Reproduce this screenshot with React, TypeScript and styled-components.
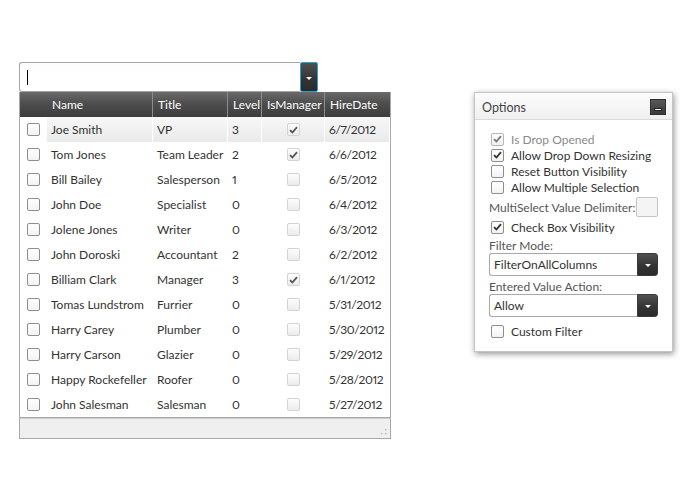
import React from "react";
import styled, { createGlobalStyle, css } from "styled-components";

const GlobalStyle = createGlobalStyle`
  html, body { margin: 0; padding: 0; background: #fff; }
  body {
    font-family: Lato, "Open Sans", sans-serif;
    font-size: 12px;
    color: #333;
    font-variant-numeric: proportional-nums;
  }
`;

const Page = styled.div`
  display: flex;
  align-items: flex-start;
  padding: 62px 0 0 19px;
`;

const GridColumn = styled.div`
  width: 372px;
  display: flex;
  flex-direction: column;
`;

const ComboBox = styled.div`
  display: flex;
  width: 299px;
  height: 30px;
`;

const ComboInput = styled.div`
  flex: 1;
  box-sizing: border-box;
  border: 1px solid #a5a5a5;
  border-right: none;
  border-radius: 3px 0 0 3px;
  background: linear-gradient(#fbfbfb, #fff 40%);
  display: flex;
  align-items: center;
  padding-left: 7px;
`;

const Caret = styled.span`
  width: 1px;
  height: 15px;
  background: #000;
`;

const DarkButton = styled.div<{ $focused?: boolean; $w: number }>`
  width: ${(p) => p.$w}px;
  box-sizing: border-box;
  display: flex;
  align-items: center;
  justify-content: center;
  background: linear-gradient(#505050, #333 60%, #2b2b2b);
  border-radius: 0 3px 3px 0;
  ${(p) =>
    p.$focused
      ? css`border: 1px solid #26a0da; border-radius: 2px;`
      : css`border: 1px solid #3a3a3a;`}
`;

const Triangle = styled.span`
  width: 0;
  height: 0;
  border-left: 3px solid transparent;
  border-right: 3px solid transparent;
  border-top: 3px solid #fff;
  margin-top: 2px;
`;

const Grid = styled.div`
  border: 1px solid #a9a9a9;
  border-top: none;
  display: grid;
  grid-template-columns: 27px 106px 75px 34px 63px 1fr;
`;

const HeaderCell = styled.div<{ $last?: boolean }>`
  height: 25px;
  background: linear-gradient(#6a6a6a, #4e4e4e 45%, #3c3c3c);
  color: #fff;
  font-size: 12px;
  display: flex;
  align-items: center;
  padding-left: 5px;
  box-sizing: border-box;
  border-right: ${(p) => (p.$last ? "none" : "1px solid #8c8c8c")};
  white-space: nowrap;
  overflow: hidden;
`;

const Cell = styled.div<{ $active?: boolean; $center?: boolean; $first?: boolean }>`
  height: 25px;
  display: flex;
  align-items: center;
  justify-content: ${(p) => (p.$center ? "center" : "flex-start")};
  padding-left: ${(p) => (p.$center ? "0" : "4px")};
  box-sizing: border-box;
  white-space: nowrap;
  color: #333;
  ${(p) =>
    p.$active &&
    !p.$first &&
    css`
      background: linear-gradient(#f7f7f7, #eaeaea);
      border-right: 1px solid #fff;
    `}
`;

const DateCell = styled(Cell)`
  letter-spacing: -0.35px;
`;

const Footer = styled.div`
  height: 16px;
  background: #efefef;
  border: 1px solid #a9a9a9;
  border-top: 1px solid #cdcdcd;
  display: flex;
  justify-content: flex-end;
  align-items: flex-end;
  padding: 0 3px 3px 0;
`;

const Box = styled.span<{ $muted?: boolean; $disabled?: boolean }>`
  width: 13px;
  height: 13px;
  box-sizing: border-box;
  border-radius: 2px;
  display: inline-flex;
  align-items: center;
  justify-content: center;
  flex: none;
  ${(p) =>
    p.$muted
      ? css`border: 1px solid #d3d3d3; background: linear-gradient(#fdfdfd, #ececec);`
      : p.$disabled
      ? css`border: 1px solid #b5b5b5; background: linear-gradient(#fff, #f0f0f0);`
      : css`border: 1px solid #8e8e8e; background: linear-gradient(#fff, #f3f3f3);`}
`;

const Check = ({ color }: { color: string }) => (
  <svg width="9" height="8" viewBox="0 0 9 8">
    <path d="M1 4.2 L3.4 6.5 L8 1.2" fill="none" stroke={color} strokeWidth="1.8" />
  </svg>
);

const CheckBox = ({ checked, muted, disabled }: { checked?: boolean; muted?: boolean; disabled?: boolean }) => (
  <Box $muted={muted} $disabled={disabled}>
    {checked && <Check color={muted ? "#555" : disabled ? "#777" : "#333"} />}
  </Box>
);

const Grip = () => (
  <svg width="6" height="6" viewBox="0 0 6 6">
    <rect x="4" y="0" width="1.3" height="1.3" fill="#aaa" />
    <rect x="0" y="4" width="1.3" height="1.3" fill="#aaa" />
    <rect x="4" y="4" width="1.3" height="1.3" fill="#aaa" />
  </svg>
);

const Panel = styled.div`
  width: 199px;
  height: 260px;
  margin: 30px 0 0 83px;
  box-sizing: border-box;
  border: 1px solid #c4c4c4;
  box-shadow: 1px 2px 6px rgba(0, 0, 0, 0.42);
  background: #fff;
  display: flex;
  flex-direction: column;
`;

const PanelHeader = styled.div`
  height: 27px;
  flex: none;
  box-sizing: border-box;
  border-bottom: 1px solid #dadada;
  background: linear-gradient(#fdfdfd, #efefef);
  display: flex;
  align-items: center;
  justify-content: space-between;
  padding: 2px 6px 0 7px;
  font-size: 12.5px;
  color: #444;
`;

const MinButton = styled.div`
  width: 16px;
  height: 16px;
  box-sizing: border-box;
  border: 1px solid #2f2f2f;
  background: linear-gradient(#585858, #3a3a3a);
  display: flex;
  align-items: flex-end;
  justify-content: center;
  padding-bottom: 3px;
  margin-top: -1px;
`;

const MinBar = styled.span`
  width: 8px;
  height: 3px;
  box-sizing: border-box;
  background: #fff;
  border: 1px solid #222;
`;

const PanelBody = styled.div`
  flex: 1;
  display: flex;
  flex-direction: column;
  padding: 11px 14px 0 14px;
`;

const OptionRow = styled.div<{ $disabled?: boolean; $mt?: number }>`
  height: 16px;
  display: flex;
  align-items: center;
  gap: 7px;
  padding-left: 2px;
  margin-top: ${(p) => p.$mt ?? 0}px;
  color: ${(p) => (p.$disabled ? "#8a8a8a" : "#333")};
  white-space: nowrap;
`;

const DelimiterRow = styled.div`
  display: flex;
  align-items: center;
  justify-content: space-between;
  margin-top: 2px;
  color: #555;
  white-space: nowrap;
`;

const SmallTextBox = styled.div`
  width: 24px;
  height: 20px;
  box-sizing: border-box;
  border: 1px solid #c5c5c5;
  border-radius: 2px;
  background: #f4f4f4;
`;

const FieldLabel = styled.div<{ $mt: number }>`
  margin-top: ${(p) => p.$mt}px;
  height: 14px;
  line-height: 14px;
  color: #555;
  white-space: nowrap;
`;

const Select = styled.div`
  display: flex;
  height: 23px;
`;

const SelectValue = styled.div`
  flex: 1;
  box-sizing: border-box;
  border: 1px solid #a8a8a8;
  border-right: none;
  border-radius: 3px 0 0 3px;
  display: flex;
  align-items: center;
  padding-left: 4px;
  color: #333;
`;

type Person = [string, string, number, boolean, string];
const people: Person[] = [
  ["Joe Smith", "VP", 3, true, "6/7/2012"],
  ["Tom Jones", "Team Leader", 2, true, "6/6/2012"],
  ["Bill Bailey", "Salesperson", 1, false, "6/5/2012"],
  ["John Doe", "Specialist", 0, false, "6/4/2012"],
  ["Jolene Jones", "Writer", 0, false, "6/3/2012"],
  ["John Doroski", "Accountant", 2, false, "6/2/2012"],
  ["Billiam Clark", "Manager", 3, true, "6/1/2012"],
  ["Tomas Lundstrom", "Furrier", 0, false, "5/31/2012"],
  ["Harry Carey", "Plumber", 0, false, "5/30/2012"],
  ["Harry Carson", "Glazier", 0, false, "5/29/2012"],
  ["Happy Rockefeller", "Roofer", 0, false, "5/28/2012"],
  ["John Salesman", "Salesman", 0, false, "5/27/2012"],
];

const headers = ["", "Name", "Title", "Level", "IsManager", "HireDate"];

export default function App() {
  return (
    <>
      <GlobalStyle />
      <Page>
        <GridColumn>
          <ComboBox>
            <ComboInput>
              <Caret />
            </ComboInput>
            <DarkButton $focused $w={18}>
              <Triangle />
            </DarkButton>
          </ComboBox>
          <Grid>
            {headers.map((h, i) => (
              <HeaderCell key={i} $last={i === 0 || i === headers.length - 1}>
                {h}
              </HeaderCell>
            ))}
            {people.map(([name, title, level, mgr, date], r) => {
              const active = r === 0;
              return (
                <React.Fragment key={name}>
                  <Cell $center $first>
                    <CheckBox />
                  </Cell>
                  <Cell $active={active}>{name}</Cell>
                  <Cell $active={active}>{title}</Cell>
                  <Cell $active={active}>{level}</Cell>
                  <Cell $active={active} $center>
                    <CheckBox muted checked={mgr} />
                  </Cell>
                  <DateCell $active={active}>{date}</DateCell>
                </React.Fragment>
              );
            })}
          </Grid>
          <Footer>
            <Grip />
          </Footer>
        </GridColumn>

        <Panel>
          <PanelHeader>
            <span>Options</span>
            <MinButton>
              <MinBar />
            </MinButton>
          </PanelHeader>
          <PanelBody>
            <OptionRow $disabled>
              <CheckBox disabled checked />
              Is Drop Opened
            </OptionRow>
            <OptionRow>
              <CheckBox checked />
              Allow Drop Down Resizing
            </OptionRow>
            <OptionRow>
              <CheckBox />
              Reset Button Visibility
            </OptionRow>
            <OptionRow>
              <CheckBox />
              Allow Multiple Selection
            </OptionRow>
            <DelimiterRow>
              MultiSelect Value Delimiter:
              <SmallTextBox />
            </DelimiterRow>
            <OptionRow $mt={2}>
              <CheckBox checked />
              Check Box Visibility
            </OptionRow>
            <FieldLabel $mt={4}>Filter Mode:</FieldLabel>
            <Select>
              <SelectValue>FilterOnAllColumns</SelectValue>
              <DarkButton $w={21}>
                <Triangle />
              </DarkButton>
            </Select>
            <FieldLabel $mt={4}>Entered Value Action:</FieldLabel>
            <Select>
              <SelectValue>Allow</SelectValue>
              <DarkButton $w={21}>
                <Triangle />
              </DarkButton>
            </Select>
            <OptionRow $mt={6}>
              <CheckBox />
              Custom Filter
            </OptionRow>
          </PanelBody>
        </Panel>
      </Page>
    </>
  );
}
